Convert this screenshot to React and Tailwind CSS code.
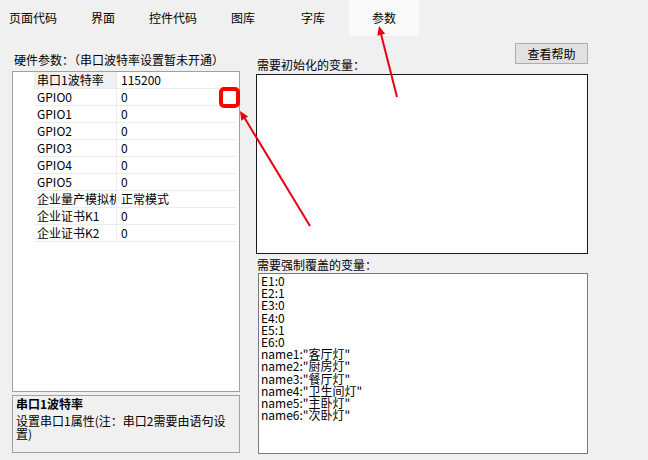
import React from 'react';

const tabs = ['页面代码', '界面', '控件代码', '图库', '字库', '参数'];

const rows = [
  { name: '串口1波特率', value: '115200', selected: true },
  { name: 'GPIO0', value: '0' },
  { name: 'GPIO1', value: '0' },
  { name: 'GPIO2', value: '0' },
  { name: 'GPIO3', value: '0' },
  { name: 'GPIO4', value: '0' },
  { name: 'GPIO5', value: '0' },
  { name: '企业量产模拟机', value: '正常模式' },
  { name: '企业证书K1', value: '0' },
  { name: '企业证书K2', value: '0' },
];

const overrides = [
  'E1:0',
  'E2:1',
  'E3:0',
  'E4:0',
  'E5:1',
  'E6:0',
  'name1:"客厅灯"',
  'name2:"厨房灯"',
  'name3:"餐厅灯"',
  'name4:"卫生间灯"',
  'name5:"主卧灯"',
  'name6:"次卧灯"',
];

const App = () => {
  return (
    <div className="relative w-[648px] h-[460px] overflow-hidden bg-[#f0f0f0] text-[12px] text-black font-['Noto_Sans_CJK_SC',sans-serif]">
      {/* Tab strip */}
      <div className="flex h-[36px] -ml-[2px]">
        {tabs.map((t, i) => (
          <div
            key={t}
            className={`w-[70px] flex items-center justify-center leading-[16px] ${i === 5 ? 'bg-[#f9f9f9] w-[67px] ml-[1px]' : ''}`}
          >
            {t}
          </div>
        ))}
      </div>

      <div className="flex pl-[12px]">
        {/* Left: property grid */}
        <div className="w-[228px] flex flex-col">
          <div className="mt-[16px] leading-[16px] pl-[2px] whitespace-nowrap">硬件参数：（串口波特率设置暂未开通）</div>
          <div className="mt-[3px] h-[321px] border border-[#a0a0a0] bg-white">
            {rows.map((r) => (
              <div key={r.name} className="flex h-[17px] leading-[16px]">
                <div className="w-[21px]" />
                <div
                  className={`w-[83px] pl-[3px] border-b border-r border-[#ececec] overflow-hidden whitespace-nowrap ${r.selected ? 'bg-[#f0f0f0]' : ''}`}
                >
                  {r.name}
                </div>
                <div className="w-[119px] pl-[4px] border-b border-[#ececec] whitespace-nowrap">{r.value}</div>
              </div>
            ))}
          </div>
          <div className="mt-[3px] h-[58px] border border-[#a0a0a0] bg-[#f0f0f0] pl-[3px] pt-[1px]">
            <div className="font-bold leading-[14px]">串口1波特率</div>
            <div className="leading-[13px] mt-[3px] whitespace-nowrap">设置串口1属性(注：串口2需要由语句设</div>
            <div className="leading-[13px]">置)</div>
          </div>
        </div>

        {/* Right: variable editors */}
        <div className="ml-[16px] w-[332px] flex flex-col">
          <div className="mt-[7px] h-[31px] flex justify-between items-start">
            <div className="mt-[14px] leading-[16px] pl-[1px]">需要初始化的变量：</div>
            <button className="h-[21px] w-[73px] bg-[#e1e1e1] border border-[#adadad] leading-[16px]">查看帮助</button>
          </div>
          <div className="h-[180px] border border-[#1a1a1a] bg-white" />
          <div className="mt-[3px] leading-[16px] pl-[1px]">需要强制覆盖的变量：</div>
          <div className="ml-[2px] h-[181px] border border-[#7a7a7a] bg-white pl-[2px] pt-[1px]">
            {overrides.map((l) => (
              <div key={l} className="leading-[12.2px] whitespace-nowrap">{l}</div>
            ))}
          </div>
        </div>
      </div>

      {/* Red annotation marks */}
      <svg className="absolute inset-0 pointer-events-none" width="648" height="460" viewBox="0 0 648 460">
        <rect x="221" y="89" width="17" height="17" rx="3" fill="#fff" stroke="#f00" strokeWidth="4" />
        <line x1="310" y1="226" x2="244" y2="117" stroke="#e60012" strokeWidth="2" />
        <polygon points="240,111 248.1,116.6 241.3,120.8" fill="#e60012" />
        <line x1="397" y1="97" x2="381" y2="34" stroke="#e60012" strokeWidth="2" />
        <polygon points="379,26 385.1,33.7 377.3,35.7" fill="#e60012" />
      </svg>
    </div>
  );
};

export default App;
